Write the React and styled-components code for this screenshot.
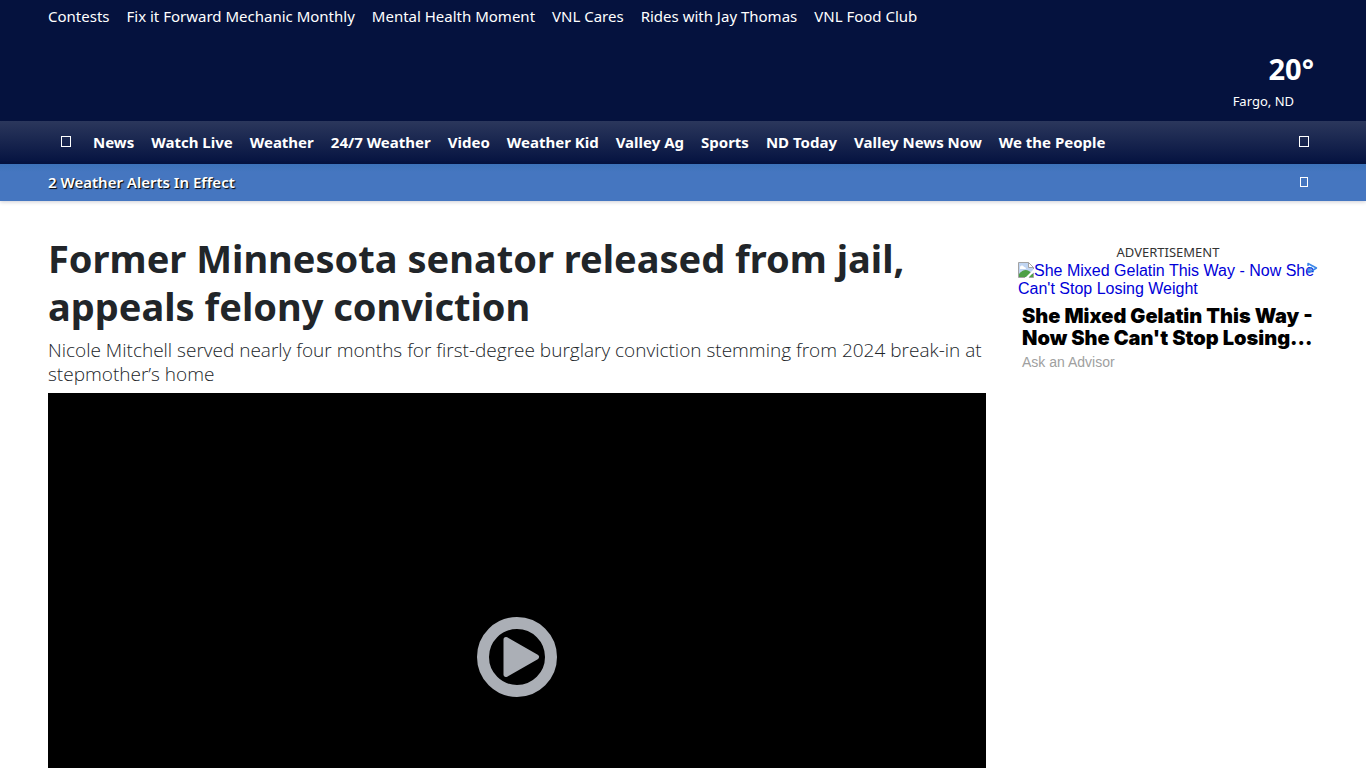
import React from 'react';
import styled, { createGlobalStyle } from 'styled-components';

const Global = createGlobalStyle`
  *, *::before, *::after { box-sizing: border-box; }
  body { margin: 0; background: #fff; color: #212529; font: 400 15px/24px "Segoe UI", "Noto Sans", "Open Sans", sans-serif; }
  html { scrollbar-width: none; }
  h1, h2, h3, p { margin: 0; }
  button { font: inherit; border: 0; padding: 0; background: none; color: inherit; cursor: pointer; }
  a { color: inherit; text-decoration: none; }
`;

const Top = styled.header`
  display: flex;
  flex-direction: column;
  justify-content: space-between;
  height: 121px;
  padding: 4px 48px 10px;
  background: #05123e;
  color: #fff;
`;

const LinkRow = styled.nav`
  display: flex;
  gap: 17px;
  white-space: nowrap;
  font-weight: ${(p) => (p.$bold ? 700 : 400)};
`;

const Conditions = styled.a`
  display: flex;
  flex-direction: column;
  align-items: flex-end;
  align-self: flex-end;
  padding-right: 4px;
`;

const Temperature = styled.strong`
  font-size: 29px;
  line-height: 44px;
`;

const City = styled.span`
  padding-right: 20px;
  font-size: 13px;
  line-height: 20px;
`;

const MainBar = styled.div`
  display: flex;
  align-items: center;
  height: 43px;
  padding: 0 56px 2px 60px;
  background: linear-gradient(#2b375c, #041240);
  color: #fff;
`;

const IconButton = styled.button`
  display: flex;
  align-items: center;
  justify-content: center;
  width: 12px;
  height: 24px;
  margin-right: ${(p) => p.$after || 0}px;
  margin-left: ${(p) => (p.$end ? 'auto' : 0)};
`;

const Glyph = styled.span`
  width: ${(p) => (p.$small ? 8 : 10)}px;
  height: ${(p) => (p.$small ? 10 : 11)}px;
  border: 1px solid #fff;
`;

const AlertBar = styled.div`
  display: flex;
  align-items: center;
  height: 37px;
  padding: 0 56px 2px 48px;
  background: linear-gradient(#3c72b9, #4576c0 8px);
  box-shadow: 0 1px 4px rgba(0, 0, 40, 0.2);
  color: #fff;
  font-weight: 600;
  text-shadow: 1px 1px 1px #000;
`;

const Page = styled.div`
  display: flex;
  align-items: flex-start;
  gap: 32px;
  padding: 33px 48px 0;
`;

const Story = styled.main`
  flex: 1;
  min-width: 0;
`;

const Headline = styled.h1`
  font-size: 38px;
  font-weight: 700;
  line-height: 48px;
`;

const Summary = styled.p`
  padding: 8px 0 7px;
  font-family: "Segoe UI", "Open Sans", sans-serif;
  font-size: 19px;
  font-weight: 300;
  line-height: 24px;
`;

const Video = styled.div`
  display: grid;
  place-items: center;
  aspect-ratio: 16 / 9;
  background: #000;
`;

const PlayButton = styled.button`
  display: block;
  width: 80px;
  height: 80px;
  svg { display: block; }
`;

const Rail = styled.aside`
  width: 300px;
  padding-top: 9px;
`;

const AdLabel = styled.p`
  padding-bottom: 1px;
  color: #333;
  font-size: 13px;
  line-height: 18px;
  text-align: center;
`;

const AdCard = styled.section`
  position: relative;
  font-family: Arial, "Liberation Sans", sans-serif;
`;

const AdPicture = styled.a`
  display: block;
  color: #0000d8;
  font-size: 16px;
  line-height: 18px;
  svg { vertical-align: top; }
`;

const AdChoices = styled.a`
  position: absolute;
  top: 0;
  right: 0;
  svg { display: block; }
`;

const AdText = styled.a`
  display: block;
  padding: 7px 4px 0;
`;

const AdTitle = styled.h3`
  color: #000;
  font-family: "Arial Black", Inter, sans-serif;
  font-size: 20px;
  font-weight: 900;
  line-height: 22px;
`;

const AdSource = styled.p`
  padding-top: 4px;
  color: #a0a0a0;
  font-size: 14px;
  line-height: 18px;
`;

const promos = ['Contests', 'Fix it Forward Mechanic Monthly', 'Mental Health Moment', 'VNL Cares', 'Rides with Jay Thomas', 'VNL Food Club'];
const sections = ['News', 'Watch Live', 'Weather', '24/7 Weather', 'Video', 'Weather Kid', 'Valley Ag', 'Sports', 'ND Today', 'Valley News Now', 'We the People'];

export default function App() {
  return (
    <>
      <Global />
      <Top>
        <LinkRow aria-label="Features">
          {promos.map((t) => <a href="#" key={t}>{t}</a>)}
        </LinkRow>
        <Conditions href="#">
          <Temperature>20°</Temperature>
          <City>Fargo, ND</City>
        </Conditions>
      </Top>
      <MainBar>
        <IconButton aria-label="Menu" $after={21}><Glyph /></IconButton>
        <LinkRow $bold aria-label="Sections">
          {sections.map((t) => <a href="#" key={t}>{t}</a>)}
        </LinkRow>
        <IconButton aria-label="Search" $end><Glyph /></IconButton>
      </MainBar>
      <AlertBar>
        <a href="#">2 Weather Alerts In Effect</a>
        <IconButton aria-label="Show alerts" $end><Glyph $small /></IconButton>
      </AlertBar>
      <Page>
        <Story>
          <Headline>Former Minnesota senator released from jail, appeals felony conviction</Headline>
          <Summary>Nicole Mitchell served nearly four months for first-degree burglary conviction stemming from 2024 break-in at stepmother’s home</Summary>
          <Video>
            <PlayButton aria-label="Play video">
              <svg width="80" height="80" viewBox="0 0 80 80">
                <circle cx="40" cy="40" r="34" fill="none" stroke="#abafb6" strokeWidth="12" />
                <path d="M29 22.5 59.5 40 29 57.5Z" fill="#abafb6" stroke="#abafb6" strokeWidth="5" strokeLinejoin="round" />
              </svg>
            </PlayButton>
          </Video>
        </Story>
        <Rail>
          <AdLabel>ADVERTISEMENT</AdLabel>
          <AdCard>
            <AdPicture href="#">
              <svg width="16" height="16" viewBox="0 0 16 16" aria-hidden="true">
                <path d="M.5.5h10l5 5v10H.5Z" fill="#c0d5f2" />
                <path d="M2 6a2 2 0 0 1 4-1 2 2 0 0 1 2 2H2Z" fill="#fff" />
                <path d="M1 15v-3q5-6 10-3l4 3v3Z" fill="#4da047" />
                <path d="M7 16 16 7v3l-6 6Z" fill="#fff" />
                <path d="M7 15.500H.5V.5h10l5 5V7M15.500 11v4.500H11" fill="none" stroke="#a3a3a3" />
                <path d="M10.500.5v5h5Z" fill="#fff" stroke="#a3a3a3" />
              </svg>
              She Mixed Gelatin This Way - Now She Can't Stop Losing Weight
            </AdPicture>
            <AdChoices href="#" aria-label="Ad choices">
              <svg width="12" height="12" viewBox="0 0 12 12" fill="none" stroke="#3b86e8" strokeLinejoin="round">
                <path d="M2 4V1.500L10.500 6 3 10.500H2V7L6 5.500" strokeWidth="1.500" />
                <circle cx="4" cy="8" r="1" />
              </svg>
            </AdChoices>
            <AdText href="#">
              <AdTitle>She Mixed Gelatin This Way - Now She Can't Stop Losing...</AdTitle>
              <AdSource>Ask an Advisor</AdSource>
            </AdText>
          </AdCard>
        </Rail>
      </Page>
    </>
  );
}
